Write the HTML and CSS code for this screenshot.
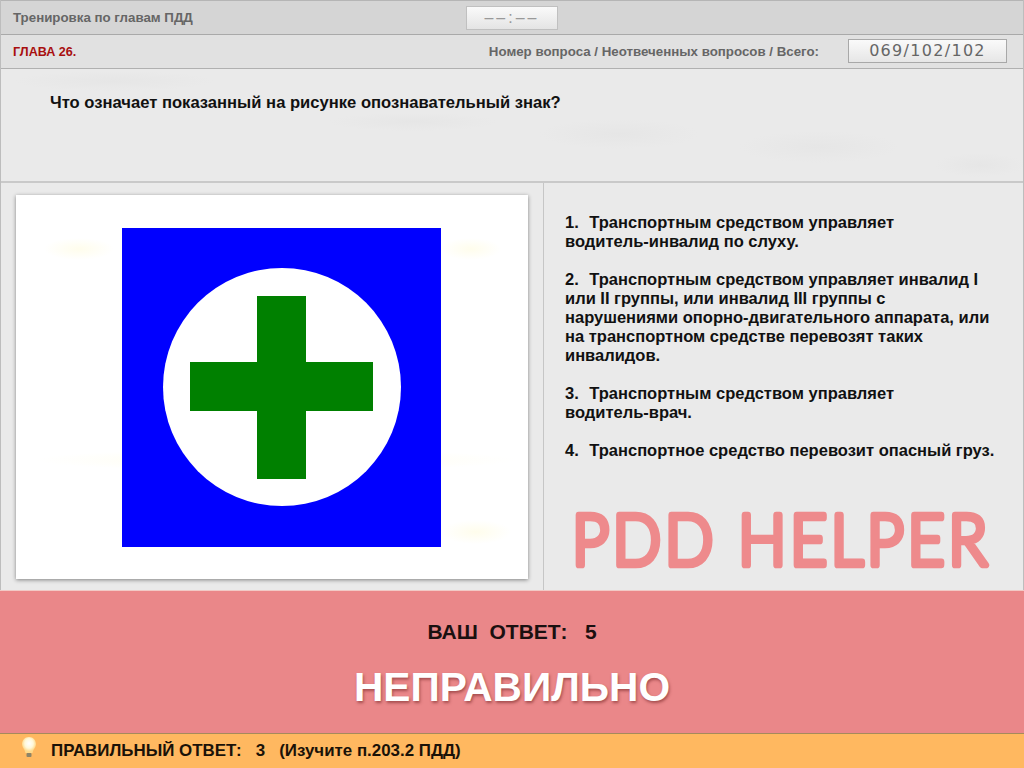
FILE: index.html
```html
<!doctype html>
<html lang="ru">
<head>
    <meta charset="utf-8">
    <title>Тренировка по главам ПДД</title>
    <link rel="stylesheet" href="styles.css">
</head>
<body>
<div class="page">
    <div class="topbar">
        <div class="topbar-title">Тренировка по главам ПДД</div>
        <div class="timer">––:––</div>
    </div>
    <div class="infobar">
        <div class="chapter">ГЛАВА 26.</div>
        <div class="counter-label">Номер вопроса / Неотвеченных вопросов / Всего:</div>
        <div class="counter">069/102/102</div>
    </div>
    <div class="question">Что означает показанный на рисунке опознавательный знак?</div>
    <div class="main">
        <div class="picture-col">
            <div class="picture">
                <svg class="sign" width="320" height="319" viewBox="0 0 320 319">
                    <rect width="319" height="319" fill="#0000ff"/>
                    <circle cx="160" cy="159" r="119" fill="#ffffff"/>
                    <rect x="135" y="68" width="49" height="183" fill="#008000"/>
                    <rect x="68" y="134" width="183" height="49" fill="#008000"/>
                </svg>
            </div>
        </div>
        <div class="answers-col">
            <ol class="answers">
                <li>1.&nbsp;&nbsp;&#8202;Транспортным средством управляет водитель&#8209;инвалид по слуху.</li>
                <li>2.&nbsp;&nbsp;&#8202;Транспортным средством управляет инвалид I или II группы, или инвалид III группы с нарушениями опорно-двигательного аппарата, или на транспортном средстве перевозят таких инвалидов.</li>
                <li>3.&nbsp;&nbsp;&#8202;Транспортным средством управляет водитель&#8209;врач.</li>
                <li>4.&nbsp;&nbsp;&#8202;Транспортное средство перевозит опасный груз.</li>
            </ol>
            <svg class="logo" width="440" height="90" viewBox="0 0 440 90">
                <text transform="scale(1 1.12)" x="3" y="62" textLength="415" lengthAdjust="spacing">PDD HELPER</text>
            </svg>
        </div>
    </div>
    <div class="result">
        <div class="your-answer">ВАШ&nbsp; ОТВЕТ:&nbsp;&nbsp; 5</div>
        <div class="verdict">НЕПРАВИЛЬНО</div>
    </div>
    <div class="hint">
        <svg class="bulb" width="18" height="24" viewBox="0 0 18 24">
            <defs>
                <radialGradient id="glow" cx="50%" cy="40%" r="50%">
                    <stop offset="0" stop-color="#ffffff"/>
                    <stop offset="0.6" stop-color="#fff8d8"/>
                    <stop offset="1" stop-color="#ffd98a"/>
                </radialGradient>
            </defs>
            <path d="M9 1C4.500 1 2 4.500 2 8c0 3.500 3 5.500 3.500 9h7C13 13.500 16 11.500 16 8c0-3.500-2.500-7-7-7z" fill="url(#glow)"/>
            <rect x="6.500" y="17" width="5" height="4" rx="1" fill="#8d8468"/>
        </svg>
        <span>ПРАВИЛЬНЫЙ ОТВЕТ:&nbsp;&nbsp; 3&nbsp;&nbsp; (Изучите п.203.2 ПДД)</span>
    </div>
</div>
</body>
</html>
```

FILE: styles.css
```css
*{
    margin:0;
    padding:0;
    box-sizing:border-box;
}
html,body{
    height:100%;
}
body{
    font-family:"Liberation Sans",Arial,sans-serif;
    background:#eaeaea;
    overflow:hidden;
}
.page{
    width:1024px;
    height:768px;
    display:flex;
    flex-direction:column;
    border-left:1px solid #bdbdbd;
    border-right:1px solid #bdbdbd;
}
.topbar{
    height:35px;
    flex:none;
    display:flex;
    align-items:center;
    background:#d5d5d5;
    border-top:1px solid #b5b5b5;
    border-bottom:1px solid #a9a9a9;
    position:relative;
}
.topbar-title{
    margin-left:12px;
    font-size:13.3px;
    font-weight:bold;
    color:#666;
}
.timer{
    position:absolute;
    left:465px;
    top:5px;
    width:92px;
    height:24px;
    background:linear-gradient(#fafafa,#e4e4e4);
    border:1px solid #c0c0c0;
    font-size:16px;
    line-height:22px;
    text-align:center;
    letter-spacing:3px;
    color:#999;
}
.infobar{
    height:34px;
    flex:none;
    display:flex;
    align-items:center;
    background:#e1e1e1;
    border-bottom:1px solid #b0b0b0;
}
.chapter{
    margin-left:12px;
    font-size:12.6px;
    font-weight:bold;
    color:#a80f0f;
    flex:1;
}
.counter-label{
    font-size:13.3px;
    font-weight:bold;
    color:#666;
    margin-right:29px;
}
.counter{
    width:159px;
    height:24px;
    margin-right:16px;
    margin-top:-2px;
    background:linear-gradient(#fafafa,#e6e6e6);
    border:1px solid #a8a8a8;
    font-family:"DejaVu Sans",sans-serif;
    font-size:16px;
    letter-spacing:1.3px;
    line-height:22px;
    text-align:center;
    color:#666;
}
/* faint watermark smudges behind the question */
.question{
    height:114px;
    flex:none;
    padding:24px 0 0 49px;
    font-size:16.6px;
    font-weight:bold;
    color:#111;
    background-color:#eaeaea;
    background-image:
        radial-gradient(closest-side,#e6e6e6,#eaeaea),
        radial-gradient(closest-side,#e6e6e6,#eaeaea),
        radial-gradient(closest-side,#e6e6e6,#eaeaea),
        radial-gradient(closest-side,#e6e6e6,#eaeaea),
        radial-gradient(closest-side,#e6e6e6,#eaeaea);
    background-repeat:no-repeat;
    background-size:200px 20px,170px 18px,160px 30px,160px 32px,90px 24px;
    background-position:13px 2px,327px 44px,538px 50px,738px 62px,934px 84px;
    border-bottom:2px solid #c9c9c9;
}
.main{
    height:407px;
    flex:none;
    display:flex;
}
.picture-col{
    width:543px;
    flex:none;
    padding:12px 0 0 15px;
    border-right:1px solid #c6c6c6;
}
.picture{
    width:512px;
    height:384px;
    background-color:#fff;
    background-image:
        radial-gradient(closest-side,#fffdec,#fff),
        radial-gradient(closest-side,#fffdec,#fff),
        radial-gradient(closest-side,#fffdec,#fff),
        radial-gradient(closest-side,#fffdec,#fff);
    background-repeat:no-repeat;
    background-size:70px 22px,60px 22px,480px 22px,70px 24px;
    background-position:28px 43px,425px 43px,20px 254px,425px 325px;
    box-shadow:0 1px 4px rgba(0,0,0,.45);
    padding:33px 0 0 106px;
}
.sign{
    display:block;
}
.answers-col{
    flex:1;
    padding:30px 0 0 21px;
    position:relative;
}
.answers{
    list-style:none;
    width:434px;
    font-size:16.5px;
    font-weight:bold;
    line-height:19px;
    color:#111;
}
.answers li{
    margin-bottom:19px;
}
.logo{
    position:absolute;
    left:25px;
    top:313px;
}
.logo text{
    font-family:Lato,sans-serif;
    font-size:64px;
    font-weight:300;
    fill:#ee8a8c;
    stroke:#ee8a8c;
    stroke-width:6px;
    stroke-linejoin:round;
}
.result{
    height:143px;
    flex:none;
    margin:0 -1px;
    background:#ea8789;
    border-top:1px solid #f2c9c5;
    text-align:center;
}
.your-answer{
    padding-top:30px;
    font-size:21px;
    line-height:22px;
    font-weight:bold;
    color:#1a1010;
}
.verdict{
    margin-top:22px;
    font-size:40.7px;
    line-height:44px;
    font-weight:bold;
    color:#fff;
    text-shadow:1px 2px 3px rgba(120,40,40,.6);
}
.hint{
    height:35px;
    flex:none;
    margin:0 -1px;
    display:flex;
    align-items:center;
    padding-left:20px;
    gap:13px;
    background:#ffb860;
    border-top:1px solid #a58a5c;
    font-size:16.9px;
    font-weight:bold;
    color:#1a1208;
}
.bulb{
    margin-top:-7px;
}
```
